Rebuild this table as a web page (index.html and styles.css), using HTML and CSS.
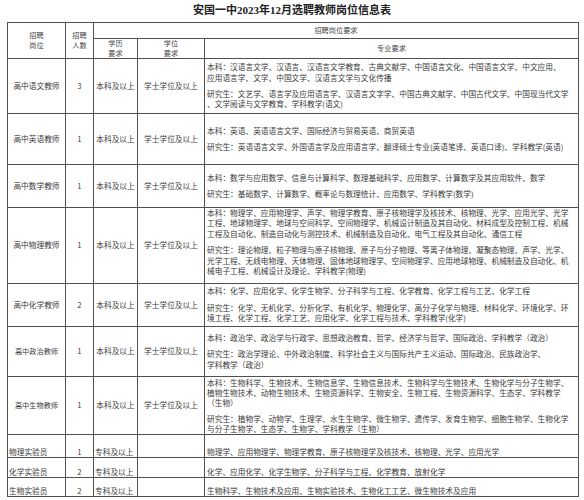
FILE: index.html
```html
<!DOCTYPE html>
<html lang="zh-CN">
<head>
<meta charset="utf-8">
<title>安国一中2023年12月选聘教师岗位信息表</title>
<link rel="stylesheet" href="styles.css">
</head>
<body>
<div class="sheet">
  <h1 class="title">安国一中2023年12月选聘教师岗位信息表</h1>
  <table class="grid">
    <colgroup>
      <col class="c-post"><col class="c-num"><col class="c-edu"><col class="c-deg"><col class="c-major">
    </colgroup>
    <thead>
      <tr class="h-top"><th rowspan="2">招聘<br>岗位</th><th rowspan="2">招聘<br>人数</th><th colspan="3">招聘岗位要求</th></tr>
      <tr class="h-sub"><th>学历<br>要求</th><th>学位<br>要求</th><th>专业要求</th></tr>
    </thead>
    <tbody>
      <tr class="r-yw">
        <td>高中语文教师</td><td>3</td><td>本科及以上</td><td>学士学位及以上</td>
        <td class="major"><p>本科：汉语言文学、汉语言、汉语言文学教育、古典文献学、中国语言文化、中国语言文学、中文应用、<br>应用语言学、文学、中国文学、汉语言文学与文化传播</p><p>研究生：文艺学、语言学及应用语言学、汉语言文字学、中国古典文献学、中国古代文学、中国现当代文学<br>、文学阅读与文学教育、学科教学(语文)</p></td>
      </tr>
      <tr class="r-yy">
        <td>高中英语教师</td><td>1</td><td>本科及以上</td><td>学士学位及以上</td>
        <td class="major"><p>本科：英语、英语语言文学、国际经济与贸易英语、商贸英语</p><p>研究生：英语语言文学、外国语言学及应用语言学、翻译硕士专业(英语笔译、英语口译)、学科教学(英语)</p></td>
      </tr>
      <tr class="r-sx">
        <td>高中数学教师</td><td>1</td><td>本科及以上</td><td>学士学位及以上</td>
        <td class="major"><p>本科：数学与应用数学、信息与计算科学、数理基础科学、应用数学、计算数学及其应用软件、数学</p><p>研究生：基础数学、计算数学、概率论与数理统计、应用数学、学科教学(数学)</p></td>
      </tr>
      <tr class="r-wl">
        <td>高中物理教师</td><td>1</td><td>本科及以上</td><td>学士学位及以上</td>
        <td class="major top"><p>本科：物理学、应用物理学、声学、物理学教育、原子核物理学及核技术、核物理、光学、应用光学、光学<br>工程、地球物理学、地球与空间科学、空间物理学、机械设计制造及其自动化、材料成型及控制工程、机械<br>工程及自动化、制造自动化与测控技术、机械制造及自动化、电气工程及其自动化、通信工程</p><p>研究生：理论物理、粒子物理与原子核物理、原子与分子物理、等离子体物理、凝聚态物理、声学、光学、<br>光学工程、无线电物理、天体物理、固体地球物理学、空间物理学、应用地球物理、机械制造及自动化、机<br>械电子工程、机械设计及理论、学科教学(物理)</p></td>
      </tr>
      <tr class="r-hx">
        <td>高中化学教师</td><td>2</td><td>本科及以上</td><td>学士学位及以上</td>
        <td class="major"><p>本科：化学、应用化学、化学生物学、分子科学与工程、化学教育、化学工程与工艺、化学工程</p><p>研究生：化学、无机化学、分析化学、有机化学、物理化学、高分子化学与物理、材料化学、环境化学、环<br>境工程、化学工程、化学工艺、应用化学、化学工程与技术、学科教学(化学)</p></td>
      </tr>
      <tr class="r-zz">
        <td class="small">高中政治教师</td><td>1</td><td>本科及以上</td><td>学士学位及以上</td>
        <td class="major"><p>本科：政治学、政治学与行政学、思想政治教育、哲学、经济学与哲学、国际政治、学科教学（政治）</p><p>研究生：政治学理论、中外政治制度、科学社会主义与国际共产主义运动、国际政治、民族政治学、<br>学科教学（政治）</p></td>
      </tr>
      <tr class="r-sw">
        <td class="small">高中生物教师</td><td>1</td><td>本科及以上</td><td>学士学位及以上</td>
        <td class="major tight"><p>本科：生物科学、生物技术、生物信息学、生物信息技术、生物科学与生物技术、生物化学与分子生物学、<br>植物生物技术、动物生物技术、生物资源科学、生物安全、生物工程、生物资源科学、生态学、学科教学<br>（生物）</p><p>研究生：植物学、动物学、生理学、水生生物学、微生物学、遗传学、发育生物学、细胞生物学、生物化学<br>与分子生物学、生态学、生物学、学科教学（生物）</p></td>
      </tr>
      <tr class="lab r-lab1">
        <td class="left">物理实验员</td><td>1</td><td class="left">专科及以上</td><td></td>
        <td class="major">物理学、应用物理学、物理学教育、原子核物理学及核技术、核物理、光学、应用光学</td>
      </tr>
      <tr class="lab r-lab2">
        <td class="left">化学实验员</td><td>2</td><td class="left">专科及以上</td><td></td>
        <td class="major">化学、应用化学、化学生物学、分子科学与工程、化学教育、放射化学</td>
      </tr>
      <tr class="lab r-lab3">
        <td class="left">生物实验员</td><td>2</td><td class="left">专科及以上</td><td></td>
        <td class="major">生物科学、生物技术及应用、生物实验技术、生物化工工艺、微生物技术及应用</td>
      </tr>
    </tbody>
  </table>
</div>
</body>
</html>
```

FILE: styles.css
```css
html, body {
  margin: 0;
  padding: 0;
  background: #fff;
}

body {
  font-family: "Noto Sans CJK SC", "Noto Sans", sans-serif;
  color: #3a3a3a;
}

.sheet {
  width: 584px;
  height: 500px;
  overflow: hidden;
}

.title {
  margin: 0;
  height: 22px;
  line-height: 21px;
  text-align: center;
  font-family: "Liberation Serif", "Noto Sans CJK SC", serif;
  font-size: 11px;
  font-weight: 700;
  color: #222;
}

.grid {
  margin-left: 7px;
  width: 571px;
  border-collapse: collapse;
  table-layout: fixed;
  font-size: 7.7px;
  line-height: 10.4px;
}

.c-post { width: 58px; }
.c-num { width: 28px; }
.c-edu { width: 44px; }
.c-deg { width: 67px; }
.c-major { width: 374px; }

.grid th,
.grid td {
  border: 1px solid #505050;
  padding: 0 2px;
  text-align: center;
  vertical-align: middle;
  font-weight: 400;
  white-space: nowrap;
  overflow: hidden;
}

.grid th {
  font-size: 7.2px;
  line-height: 9.5px;
  color: #444;
}

.h-top { height: 16px; }
.h-sub { height: 18px; }

.r-yw { height: 55px; }
.r-yy { height: 51px; }
.r-sx { height: 43px; }
.r-wl { height: 76px; }
.r-hx { height: 43px; }
.r-zz { height: 50px; }
.r-sw { height: 58px; }
.r-lab1 { height: 23px; }
.r-lab2 { height: 20px; }
.r-lab3 { height: 19px; }

.grid td.major {
  text-align: left;
  padding-left: 2px;
}

.grid td.top {
  vertical-align: top;
}

.major p {
  margin: 0;
}

.major p + p {
  margin-top: 6px;
}

.grid td.tight {
  line-height: 10px;
}

.small {
  font-size: 7.2px;
}

.lab td {
  vertical-align: bottom;
  line-height: 10px;
}

.grid td.left {
  text-align: left;
  padding-left: 1px;
}
```
